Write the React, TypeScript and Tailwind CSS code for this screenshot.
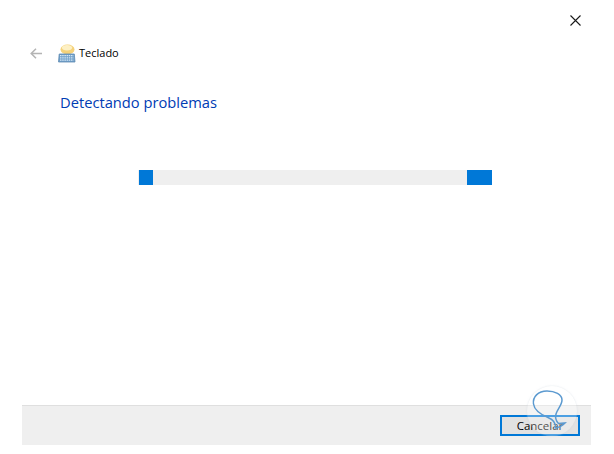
import React from 'react';

const KeyboardIcon = () => (
  <svg width="18" height="19" viewBox="0 0 18 19" className="shrink-0">
    <ellipse cx="9.5" cy="5.5" rx="7" ry="5" fill="#f5d27a" />
    <ellipse cx="9" cy="3.8" rx="5.2" ry="2.8" fill="#fdf0c4" />
    <path d="M1.2 10 L16.3 10 L17 18 L0.5 18 Z" fill="#6f9fc8" stroke="#5f8bb3" strokeWidth="0.8" />
    <path d="M2 11.7 H15.5 M2 13.9 H15.5 M2 16.1 H15.5" stroke="#d6e8f6" strokeWidth="1.2" strokeDasharray="1.5 0.7" />
  </svg>
);

const Watermark = () => (
  <div className="absolute left-[527px] top-[386px] w-[50px] h-[50px] rounded-full bg-white/30 shadow-[0_0_2px_rgba(200,210,220,0.6)]">
    <svg width="50" height="50" viewBox="0 0 50 50" fill="none">
      <path
        d="M20 5 C11 5 5.5 11 6.5 18 C7.5 25 15 29 21 31.5 C26 33.5 29 36 28.5 42 C32 41.5 35 40 38 37 L31.5 37.5 C29 35 28 32 29 28 C30.5 23 35 19 35 14 C35 8.5 28 5 20 5 Z"
        stroke="#5c9ad0"
        strokeWidth="1.5"
      />
    </svg>
  </div>
);

export default function App() {
  return (
    <div className="relative w-[614px] h-[454px] bg-white flex flex-col font-['Segoe_UI','Open_Sans','Liberation_Sans',sans-serif] overflow-hidden">
      <div className="flex justify-end pt-[15px] pr-[33px] h-[44px]">
        <svg width="11" height="11" viewBox="0 0 11 11" stroke="#1a1a1a" strokeWidth="1.1">
          <path d="M0.5 0.5 L10.5 10.5 M10.5 0.5 L0.5 10.5" />
        </svg>
      </div>

      <div className="flex items-center h-[18px] pl-[30px]">
        <svg width="12" height="11" viewBox="0 0 12 11" fill="none" stroke="#b4b4b4" strokeWidth="1.5" className="mr-[16px]">
          <path d="M6 0.8 L1.2 5.5 L6 10.2 M1.2 5.5 H12" />
        </svg>
        <KeyboardIcon />
        <span className="ml-[3px] text-[11px] leading-[18px] text-black">Teclado</span>
      </div>

      <h1 className="ml-[60px] mt-[28px] text-[14.7px] leading-[24px] font-normal text-[#003cb4]">Detectando problemas</h1>

      <div className="ml-[138px] mt-[56px] w-[354px] h-[15px] bg-[#efefef] flex justify-between">
        <div className="ml-px w-[14px] bg-[#0078d7]" />
        <div className="w-[25px] bg-[#0078d7]" />
      </div>

      <div className="mt-auto mb-[9px] ml-[22px] w-[569px] h-[40px] bg-[#efefef] border-t border-[#dfdfdf] flex items-center justify-end pr-[11px]">
        <button className="w-[80px] h-[21px] border-2 border-[#0078d7] bg-[#e1e1e1] text-[11.5px] leading-none text-black">Cancelar</button>
      </div>

      <Watermark />
    </div>
  );
}
